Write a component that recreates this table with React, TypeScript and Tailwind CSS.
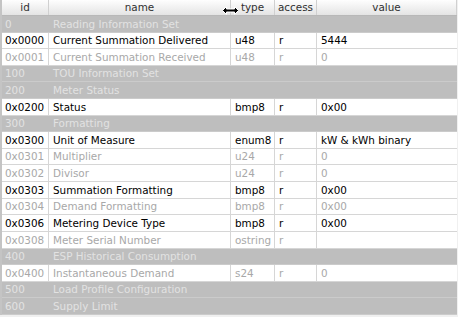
import React from "react";

type Row =
  | { kind: "section"; id: string; name: string }
  | { kind: "item"; id: string; name: string; type: string; access: string; value: string; disabled?: boolean };

const rows: Row[] = [
  { kind: "section", id: "0", name: "Reading Information Set" },
  { kind: "item", id: "0x0000", name: "Current Summation Delivered", type: "u48", access: "r", value: "5444" },
  { kind: "item", id: "0x0001", name: "Current Summation Received", type: "u48", access: "r", value: "0", disabled: true },
  { kind: "section", id: "100", name: "TOU Information Set" },
  { kind: "section", id: "200", name: "Meter Status" },
  { kind: "item", id: "0x0200", name: "Status", type: "bmp8", access: "r", value: "0x00" },
  { kind: "section", id: "300", name: "Formatting" },
  { kind: "item", id: "0x0300", name: "Unit of Measure", type: "enum8", access: "r", value: "kW & kWh binary" },
  { kind: "item", id: "0x0301", name: "Multiplier", type: "u24", access: "r", value: "0", disabled: true },
  { kind: "item", id: "0x0302", name: "Divisor", type: "u24", access: "r", value: "0", disabled: true },
  { kind: "item", id: "0x0303", name: "Summation Formatting", type: "bmp8", access: "r", value: "0x00" },
  { kind: "item", id: "0x0304", name: "Demand Formatting", type: "bmp8", access: "r", value: "0x00", disabled: true },
  { kind: "item", id: "0x0306", name: "Metering Device Type", type: "bmp8", access: "r", value: "0x00" },
  { kind: "item", id: "0x0308", name: "Meter Serial Number", type: "ostring", access: "r", value: "", disabled: true },
  { kind: "section", id: "400", name: "ESP Historical Consumption" },
  { kind: "item", id: "0x0400", name: "Instantaneous Demand", type: "s24", access: "r", value: "0", disabled: true },
  { kind: "section", id: "500", name: "Load Profile Configuration" },
  { kind: "section", id: "600", name: "Supply Limit" },
];

const cols = ["w-[47px]", "w-[182px]", "w-[44px]", "w-[42px]", "flex-1"];

function ResizeCursor() {
  return (
    <svg width="17" height="9" viewBox="0 0 17 9" className="absolute left-[222px] top-[6px]">
      <path
        d="M0.5 4.5 L4.5 0.5 L4.5 3 L12.5 3 L12.5 0.5 L16.5 4.5 L12.5 8.5 L12.5 6 L4.5 6 L4.5 8.5 Z"
        fill="#000"
        stroke="#fff"
        strokeWidth="1"
      />
    </svg>
  );
}

export default function App() {
  const headers = ["id", "name", "type", "access", "value"];
  return (
    <div
      className="relative w-[458px] h-[317px] bg-[#f0f0f0] overflow-hidden text-[10.4px] leading-none"
      style={{ fontFamily: '"DejaVu Sans", sans-serif' }}
    >
      <div className="flex flex-col h-[315px] w-[457px] border-l-2 border-[#c4c4c4] bg-white">
        <div className="flex h-[16px] shrink-0 border-b border-[#b8b8b8] bg-gradient-to-b from-[#fefefe] to-[#e4e4e4] text-[#303030]">
          {headers.map((h, i) => (
            <div
              key={h}
              className={`${cols[i]} flex items-center justify-center border-r border-[#d0d0d0]`}
            >
              {h}
            </div>
          ))}
        </div>
        <div className="grid flex-1" style={{ gridTemplateRows: `repeat(${rows.length}, 1fr)` }}>
          {rows.map((r, idx) =>
            r.kind === "section" ? (
              <div key={idx} className="flex bg-[#bebebe] border-b border-[#cbcbcb] text-[#e2e2e2]">
                <div className={`${cols[0]} flex items-center pl-[3px]`}>{r.id}</div>
                <div className={`${cols[1]} flex items-center pl-[4px]`}>{r.name}</div>
              </div>
            ) : (
              <div
                key={idx}
                className={`flex bg-white border-b border-[#d6d6d6] ${r.disabled ? "text-[#a8a8a8]" : "text-black"}`}
              >
                <div className={`${cols[0]} flex items-center pl-[3px] border-r border-[#d6d6d6]`}>{r.id}</div>
                <div className={`${cols[1]} flex items-center pl-[4px] border-r border-[#d6d6d6]`}>{r.name}</div>
                <div className={`${cols[2]} flex items-center pl-[4px] border-r border-[#d6d6d6]`}>{r.type}</div>
                <div className={`${cols[3]} flex items-center pl-[4px] border-r border-[#d6d6d6]`}>{r.access}</div>
                <div className={`${cols[4]} flex items-center pl-[4px]`}>{r.value}</div>
              </div>
            )
          )}
        </div>
      </div>
      <ResizeCursor />
    </div>
  );
}
